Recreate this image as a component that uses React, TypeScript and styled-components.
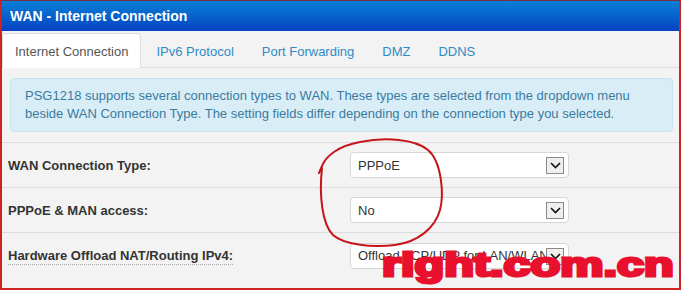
import React from 'react';
import styled, { createGlobalStyle } from 'styled-components';

const GlobalStyle = createGlobalStyle`
  html, body {
    margin: 0;
    padding: 0;
    background: #f3f3f3;
  }
  * {
    box-sizing: border-box;
  }
`;

const tabs = ['Internet Connection', 'IPv6 Protocol', 'Port Forwarding', 'DMZ', 'DDNS'];

const rows = [
  { label: 'WAN Connection Type:', value: 'PPPoE' },
  { label: 'PPPoE & MAN access:', value: 'No' },
  { label: 'Hardware Offload NAT/Routing IPv4:', value: 'Offload TCP/UDP for LAN/WLAN', hint: true },
];

const Chevron = () => (
  <svg width="11" height="7" viewBox="0 0 11 7">
    <path d="M1 1 L5.5 5.5 L10 1" fill="none" stroke="#111" strokeWidth="1.6" />
  </svg>
);

const App = () => {
  return (
    <Frame>
      <GlobalStyle />
      <Header>WAN - Internet Connection</Header>
      <TabBar>
        {tabs.map((t, i) => (
          <Tab key={t} active={i === 0}>{t}</Tab>
        ))}
      </TabBar>
      <Alert>
        PSG1218 supports several connection types to WAN. These types are selected from the dropdown menu
        beside WAN Connection Type. The setting fields differ depending on the connection type you selected.
      </Alert>
      <Table>
        {rows.map((r) => (
          <Row key={r.label}>
            <Label><LabelText hint={r.hint}>{r.label}</LabelText></Label>
            <Select>
              <SelectText>{r.value}</SelectText>
              <ArrowBox><Chevron /></ArrowBox>
            </Select>
          </Row>
        ))}
      </Table>
      <Scribble width="681" height="290" viewBox="0 0 681 290">
        <path
          d="M319 173 L322 166 C326 156 338 146 360 142 C385 137 415 139 428 150 C442 162 444 195 440 210 C435 228 418 242 395 245 C370 248 343 244 333 235 C322 224 319 195 322 168"
          fill="none"
          stroke="#c4161c"
          strokeWidth="2"
          strokeLinecap="round"
        />
      </Scribble>
      <Watermark>right.com.cn</Watermark>
    </Frame>
  );
};

export default App;

const Frame = styled.div`
  position: relative;
  width: 681px;
  height: 290px;
  overflow: hidden;
  background: #f3f3f3;
  border: 2px solid #cf2323;
  border-top: 1px solid #7a2a4a;
  font-family: 'Liberation Sans', Arial, sans-serif;
`;

const Header = styled.div`
  height: 30px;
  margin: 0 -2px;
  padding-left: 10px;
  display: flex;
  align-items: center;
  background: linear-gradient(#0a7fd6, #0765cd 45%, #0642c2);
  color: #fff;
  font-size: 14px;
  font-weight: bold;
`;

const TabBar = styled.div`
  height: 37px;
  padding-top: 2px;
  display: flex;
  border-bottom: 1px solid #dcdcdc;
`;

const Tab = styled.div<{ active?: boolean }>`
  height: 35px;
  margin-right: 2px;
  padding: 0 12px;
  display: flex;
  align-items: center;
  font-size: 13px;
  border-radius: 4px 4px 0 0;
  color: ${(p) => (p.active ? '#555' : '#2f8bc6')};
  background: ${(p) => (p.active ? '#fff' : 'transparent')};
  border: 1px solid ${(p) => (p.active ? '#dcdcdc' : 'transparent')};
  border-bottom: none;
  margin-bottom: -1px;
`;

const Alert = styled.div`
  margin: 10px 6px 10px 8px;
  padding: 8px 14px;
  background: #d9edf7;
  border: 1px solid #c6e5f2;
  border-radius: 4px;
  color: #3a7ba0;
  font-size: 13px;
  line-height: 18px;
`;

const Table = styled.div`
  border-top: 1px solid #dcdcdc;
`;

const Row = styled.div`
  height: 45px;
  padding-left: 6px;
  display: grid;
  grid-template-columns: 342px 219px;
  align-items: center;
  border-bottom: 1px solid #dcdcdc;
  &:last-child {
    border-bottom: none;
  }
`;

const Label = styled.div`
  font-size: 13px;
  font-weight: bold;
  color: #333;
`;

const LabelText = styled.span<{ hint?: boolean }>`
  border-bottom: ${(p) => (p.hint ? '1px dotted #aaa' : 'none')};
  padding-bottom: 1px;
`;

const Select = styled.div`
  position: relative;
  height: 26px;
  padding-left: 7px;
  display: flex;
  align-items: center;
  background: #fff;
  border: 1px solid #d6d6d6;
  border-radius: 4px;
  overflow: hidden;
`;

const SelectText = styled.span`
  font-size: 13px;
  color: #333;
  white-space: nowrap;
`;

const ArrowBox = styled.div`
  position: absolute;
  right: 4px;
  top: 4px;
  width: 18px;
  height: 17px;
  display: flex;
  align-items: center;
  justify-content: center;
  background: #efefef;
  border: 1px solid #8a8a8a;
`;

const Scribble = styled.svg`
  position: absolute;
  left: -2px;
  top: -1px;
  pointer-events: none;
`;

const Watermark = styled.div`
  position: absolute;
  left: 380px;
  top: 246px;
  font-family: 'Liberation Sans', Arial, sans-serif;
  font-size: 34px;
  line-height: 1;
  font-weight: bold;
  color: #e8102c;
  -webkit-text-stroke: 3px #e8102c;
  transform: scaleX(1.43);
  transform-origin: left top;
  white-space: nowrap;
`;
